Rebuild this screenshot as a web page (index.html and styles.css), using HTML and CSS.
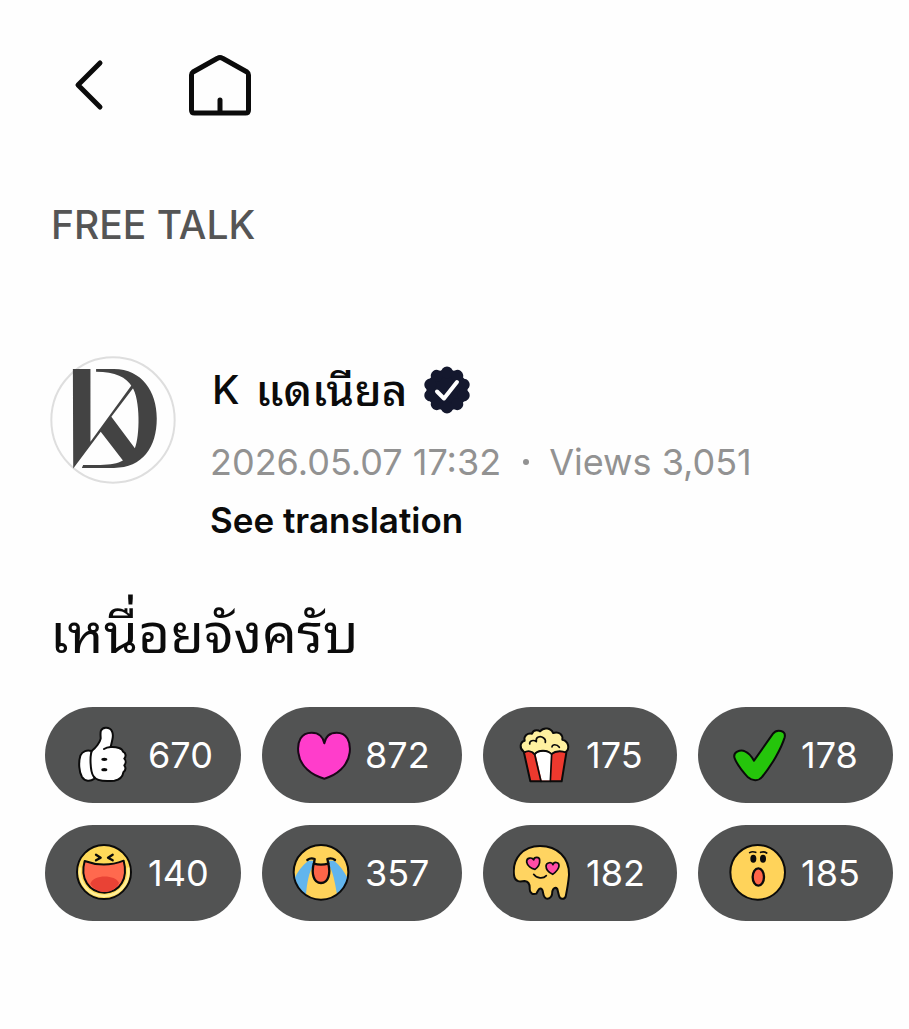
FILE: index.html
```html
<!DOCTYPE html>
<html lang="en">
<head>
<meta charset="utf-8">
<meta name="viewport" content="width=device-width, initial-scale=1">
<title>Free Talk</title>
<link rel="stylesheet" href="styles.css">
</head>
<body>
<main class="page">
  <nav class="topbar" aria-label="Navigation">
    <button class="icon-button back" type="button" aria-label="Back">
      <svg viewBox="0 0 32 64" width="32" height="64"><path d="M28 9 6 31 28 53" /></svg>
    </button>
    <a class="icon-button" href="#home" aria-label="Home">
      <svg viewBox="0 0 64 64" width="64" height="64"><path d="M29.500 4.300Q32 2.800 34.500 4.300L59 18Q60.500 19 60.500 21V56Q60.500 59 57.500 59H6.500Q3.500 59 3.500 56V21Q3.500 19 5 18ZM32 59V46" /></svg>
    </a>
  </nav>

  <h2 class="category">FREE TALK</h2>

  <article class="post">
    <header class="author">
      <svg class="avatar" viewBox="28 33 380 385" role="img" aria-label="K แดเนียล">
        <ellipse cx="218" cy="225.500" rx="186" ry="189" fill="#fefefe" stroke="#dedede" stroke-width="6" />
        <g fill="#434343">
          <path d="M97 72H150V291L275 119 283 124 213 216 284 311C299 275 301 164 276 126 258 96 225 80 167 80V72H221C305 73 350 139 350 221 350 309 307 369 221 370H124L128 361H180C211 361 232 357 248 348L181 261 98 372Z" />
        </g>
      </svg>
      <div class="details">
        <h1 class="name"><span>K</span><span class="name-thai" lang="th">แดเนียล</span>
          <svg class="badge" viewBox="0 0 48 48" width="48" height="48" role="img" aria-label="Verified">
            <circle cx="24" cy="24" r="20.500" fill="#14182e" />
            <circle cx="24" cy="24" r="17.500" fill="none" stroke="#14182e" stroke-width="12" stroke-linecap="round" pathLength="100" stroke-dasharray="0.01 9.99" transform="rotate(-90 24 24)" />
            <path d="M14 25.500 21 32.500 34 16" fill="none" stroke="#fff" stroke-width="4" stroke-linecap="round" stroke-linejoin="round" />
          </svg>
        </h1>
        <p class="meta"><time datetime="2026-05-07T17:32">2026.05.07 17:32</time><span class="dot"></span><span>Views 3,051</span></p>
        <button class="translate" type="button">See translation</button>
      </div>
    </header>
    <p class="message" lang="th">เหนื่อยจังครับ</p>
  </article>

  <section class="reactions" aria-label="Reactions">
    <button class="pill" type="button">
      <svg viewBox="105 75 180 180" aria-hidden="true" stroke="#0b0b0b" stroke-width="6" stroke-linejoin="round" stroke-linecap="round">
        <path fill="#fff" d="M154 153C142 149 127 153 121 167 115 187 117 216 126 231 135 245 151 245 163 236Z" />
        <path fill="#fff" d="M157 151C167 144 180 127 182 116 182 103 177 84 197 83 218 82 221 103 217 119L212 141C230 140 248 145 249 155 259 159 258 170 253 176 258 181 258 190 253 196 258 203 257 211 250 217 248 232 239 239 223 242 197 245 170 244 160 228 151 215 148 165 157 151Z" />
        <path fill="none" d="M192 147Q200 142 212 141" />
        <g fill="#0b0b0b" stroke="none"><ellipse cx="193" cy="178" rx="9" ry="5" /><ellipse cx="193" cy="209" rx="9" ry="5" /></g>
      </svg>
      <span>670</span>
    </button>
    <button class="pill" type="button">
      <svg viewBox="111 75 180 180" aria-hidden="true">
        <path fill="#ff3dcb" stroke="#190817" stroke-width="6" stroke-linejoin="round" d="M208 130C205 113 193 98 170 98 138 98 126 124 130 158 135 199 170 226 208 236 244 226 279 199 284 158 288 124 275 98 245 98 222 98 211 113 208 130Z" />
      </svg>
      <span>872</span>
    </button>
    <button class="pill" type="button">
      <svg viewBox="114 75 180 180" aria-hidden="true" stroke="#0b0b0b" stroke-width="6" stroke-linejoin="round" stroke-linecap="round">
        <path fill="#fff1a0" d="M146 155C133 146 134 126 149 122 145 107 158 98 171 101 176 85 193 92 195 94 207 80 228 84 234 99 253 93 264 105 262 119 281 123 286 147 271 157L263 166H154Z" />
        <path fill="#ee392e" d="M147 158C158 151 171 153 179 163 190 149 218 149 228 163 242 152 257 151 274 158L260 244H166Z" />
        <path fill="#fff" stroke="none" d="M182 163C192 152 217 152 228 163L226 241H200Z" />
        <path fill="none" stroke-width="5" d="M179 163C190 149 218 149 230 163M179 163 198 244M230 163 226 244" />
        <path fill="none" stroke-width="5" d="M164 132C163 121 176 119 184 125 181 110 196 106 206 114 212 118 212 122 211 127M231 141C231 132 246 132 253 142" />
      </svg>
      <span>175</span>
    </button>
    <button class="pill" type="button">
      <svg viewBox="114 75 180 180" aria-hidden="true">
        <path fill="#25c50b" stroke="#0b0b0b" stroke-width="6" stroke-linejoin="round" d="M192 182 249 101C260 86 289 91 284 112 273 148 244 197 216 231 207 243 187 244 174 232 160 217 142 195 134 175 127 157 151 147 165 154 178 160 186 171 192 182Z" />
      </svg>
      <span>178</span>
    </button>
    <button class="pill" type="button">
      <svg viewBox="105 75 180 180" aria-hidden="true" stroke="#0b0b0b" stroke-linejoin="round" stroke-linecap="round">
        <circle cx="192" cy="162" r="81" fill="#ffda59" stroke-width="6" />
        <path fill="none" stroke="#fff09c" stroke-width="7" d="M120 151C115 194 145 234 192 234 239 234 270 194 265 151" />
        <path fill="#ff694e" stroke-width="6" d="M134 129Q193 151 251 128C265 181 241 222 194 224 147 223 119 182 134 129Z" />
        <path fill="#e94235" stroke="none" d="M151 197C160 169 226 169 237 195 221 231 170 231 151 197Z" />
        <path fill="none" stroke-width="7" d="M168 110 182 119 168 127M218 110 204 119 218 127" />
      </svg>
      <span>140</span>
    </button>
    <button class="pill" type="button">
      <svg viewBox="111 75 180 180" aria-hidden="true" stroke="#0b0b0b" stroke-linejoin="round" stroke-linecap="round">
        <circle cx="198" cy="163" r="82" fill="#ffd35a" stroke="none" />
        <path fill="#62b5ed" stroke="none" d="M160 128H180L177 140C161 160 156 197 153 230Q124 212 118 182C128 160 142 142 160 128ZM237 128H217L220 140C234 158 240 195 246 229Q272 213 278 181C266 158 254 141 237 128Z" />
        <circle cx="198" cy="163" r="82" fill="none" stroke-width="6" />
        <path fill="#ff6548" stroke-width="7" d="M176 137Q198 143 220 137C227 165 221 195 198 195 175 195 169 165 176 137Z" />
        <path fill="none" stroke-width="7" d="M157 126Q167 118 179 123L177 136M240 126Q230 118 217 123L220 136" />
      </svg>
      <span>357</span>
    </button>
    <button class="pill" type="button">
      <svg viewBox="114 75 180 180" aria-hidden="true" stroke="#0b0b0b" stroke-linejoin="round" stroke-linecap="round">
        <path fill="#ffd461" stroke-width="6" d="M117 171C111 122 144 84 195 84 248 84 283 119 282 171 280 194 276 216 272 236 269 245 255 245 252 233L247 213C241 206 234 211 232 220 232 232 229 242 217 242 202 242 207 224 201 214 194 206 190 217 184 227 173 231 164 225 164 213 165 200 163 191 149 189 137 191 120 194 117 171Z" />
        <path fill="#ff4ca6" stroke-width="5" d="M176 126C177 116 194 115 194 127 195 139 187 149 180 154 169 152 157 144 155 132 154 119 171 116 176 126ZM234 140C236 130 253 131 252 144 251 156 240 164 233 169 222 164 213 155 213 144 214 132 231 131 234 140Z" />
        <path fill="none" stroke-width="5" d="M176 169C185 182 205 183 214 173" />
      </svg>
      <span>182</span>
    </button>
    <button class="pill" type="button">
      <svg viewBox="114 75 180 180" aria-hidden="true" stroke="#0b0b0b" stroke-linejoin="round" stroke-linecap="round">
        <circle cx="203" cy="163" r="82" fill="#ffd35a" stroke-width="6" />
        <ellipse cx="205" cy="177" rx="17" ry="26" fill="#ff6548" stroke-width="7" />
        <g fill="#0b0b0b" stroke="none"><ellipse cx="190" cy="122" rx="9" ry="12" /><ellipse cx="219" cy="122" rx="9" ry="12" /></g>
        <path fill="none" stroke-width="5" d="M179 104Q187 99 197 103M212 103Q222 99 230 105" />
      </svg>
      <span>185</span>
    </button>
  </section>
</main>
</body>
</html>
```
FILE: styles.css
```css
* { box-sizing: border-box; }

body {
  margin: 0;
  background: #fefefe;
  color: #0b0b0b;
  font-family: Inter, "Noto Sans Thai Looped", "Noto Sans Thai", "Loma", "Noto Sans", sans-serif;
}

h1, h2, p { margin: 0; }

button {
  padding: 0;
  border: 0;
  background: none;
  color: inherit;
  font: inherit;
}

.page { padding: 54px 16px 40px 45px; }

.topbar {
  display: flex;
  align-items: center;
  gap: 84px;
  padding-left: 27px;
}

.icon-button {
  display: block;
  height: 64px;
  color: inherit;
}

.icon-button svg {
  display: block;
  fill: none;
  stroke: currentColor;
  stroke-width: 5;
  stroke-linecap: round;
  stroke-linejoin: round;
}

.category {
  margin-top: 83px;
  padding-left: 6px;
  color: #555;
  font-size: 39px;
  font-weight: 500;
  line-height: 48px;
}

.post { padding-left: 5px; }

.author {
  display: flex;
  gap: 34px;
  margin-top: 107px;
}

.avatar {
  flex: none;
  width: 126px;
  height: 128px;
}

.name {
  display: flex;
  align-items: center;
  gap: 16px;
  margin-top: 6px;
  padding-left: 2px;
  font-size: 40px;
  font-weight: 500;
  line-height: 56px;
}

.name-thai { font-size: 44px; }

.badge { flex: none; }

.meta {
  display: flex;
  align-items: center;
  margin-top: 20px;
  color: #929292;
  font-size: 36px;
  line-height: 48px;
}

.dot {
  width: 6px;
  height: 6px;
  margin: 0 20px 0 22px;
  border-radius: 50%;
  background: currentColor;
}

.translate {
  margin-top: 10px;
  font-size: 35px;
  font-weight: 600;
  line-height: 48px;
}

.message {
  margin-top: 49px;
  font-size: 55px;
  line-height: 80px;
}

.reactions {
  display: grid;
  grid-template-columns: 196fr 200fr 194fr 195fr;
  gap: 22px 21px;
  margin-top: 34px;
}

.pill {
  display: flex;
  align-items: center;
  gap: 13px;
  height: 96px;
  padding-left: 30px;
  border-radius: 48px;
  background: #525353;
  color: #fff;
  font-size: 36px;
}

.pill svg {
  flex: none;
  width: 60px;
  height: 60px;
}
```
